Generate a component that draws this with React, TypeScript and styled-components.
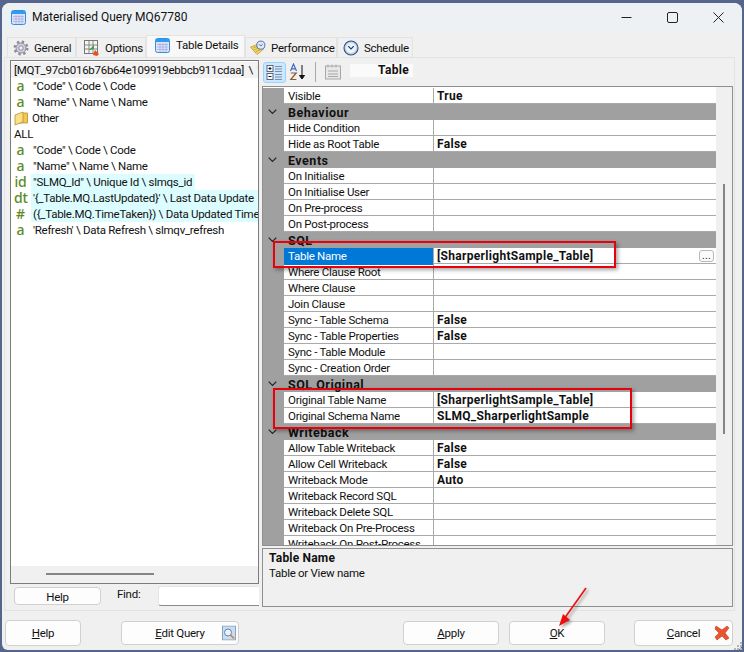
import React from "react";
import styled, { createGlobalStyle } from "styled-components";

const Global = createGlobalStyle`
  html, body { margin: 0; padding: 0; background: #55658c; overflow: hidden; }
  * { box-sizing: border-box; }
`;

const Screen = styled.div`
  position: relative;
  width: 744px;
  height: 652px;
  padding: 3px 2px 2px 2px;
  background: #55658c;
  font-family: "Roboto", "Liberation Sans", sans-serif;
  font-size: 11.5px;
  letter-spacing: -0.27px;
  color: #111;
  overflow: hidden;
`;
const Dialog = styled.div`
  width: 740px;
  height: 647px;
  display: flex;
  flex-direction: column;
  background: #f0f0f0;
  border-radius: 8px 8px 6px 6px;
  overflow: hidden;
`;
const TitleBar = styled.div`
  height: 30px;
  flex: none;
  display: flex;
  align-items: center;
  padding: 0 0 2px 9px;
  gap: 6px;
  background: #eef1f4;
`;
const TitleText = styled.span`
  flex: 1;
  font-size: 12px;
  letter-spacing: 0;
`;
const WinBtns = styled.div`
  display: flex;
  align-items: center;
  padding-right: 1px;
`;
const WinBtn = styled.div`
  width: 46px;
  height: 28px;
  display: flex;
  align-items: center;
  justify-content: center;
`;
const TabRow = styled.div`
  height: 24px;
  flex: none;
  display: flex;
  align-items: flex-end;
  padding-left: 5px;
`;
const Tab = styled.div<{ $active?: boolean; $w: number; $pl?: number }>`
  width: ${(p) => p.$w}px;
  height: ${(p) => (p.$active ? 22 : 20)}px;
  display: flex;
  align-items: center;
  gap: ${(p) => (p.$active ? 6 : 5)}px;
  padding: ${(p) => (p.$active ? "0 0 3px 8px" : `0 0 0 ${p.$pl ?? 5}px`)};
  background: ${(p) => (p.$active ? "#f8f8f8" : "#f0f0f0")};
  border: 1px solid #e3e3e3;
  border-bottom: none;
`;
const TabPanel = styled.div`
  height: 554px;
  flex: none;
  margin: 0 7px 0 2px;
  border: 1px solid #e3e3e3;
  display: grid;
  grid-template-columns: 249px 471px;
  column-gap: 3px;
  padding: 2px 3px 4px 5px;
`;
const LeftCol = styled.div`
  display: flex;
  flex-direction: column;
`;
const ListBox = styled.div`
  height: 524px;
  flex: none;
  display: flex;
  flex-direction: column;
  border: 1px solid #7c7c7c;
  background: #fff;
`;
const ListBody = styled.div`
  flex: 1;
  padding-top: 1px;
  overflow: hidden;
`;
const ListRow = styled.div<{ $selected?: boolean }>`
  height: 16px;
  display: flex;
  align-items: center;
  white-space: pre;
  overflow: hidden;
  background: ${(p) => (p.$selected ? "#f2f2f2" : "transparent")};
  word-spacing: ${(p) => (p.$selected ? "2px" : "0")};
  padding-left: 3px;
`;
const TypeIcon = styled.span`
  width: 13px;
  flex: none;
  margin-right: 4px;
  text-align: center;
  font-size: 14px;
  font-weight: 500;
  letter-spacing: -0.2px;
  color: #5c8a1e;
  font-family: "Noto Sans", sans-serif;
  line-height: 16px;
`;
const FolderWrap = styled.span`
  width: 16px;
  flex: none;
  display: flex;
`;
const ItemText = styled.span<{ $hl?: boolean; $fill?: boolean }>`
  padding: 0 3px 0 2px;
  line-height: 16px;
  background: ${(p) => (p.$hl ? "#dcfdff" : "transparent")};
  ${(p) => (p.$fill ? "flex: 1;" : "")}
`;
const ListScroll = styled.div`
  height: 17px;
  flex: none;
  background: #f0f0f0;
  padding: 7px 0 0 35px;
`;
const ScrollThumbH = styled.div`
  width: 108px;
  height: 2px;
  background: #858585;
`;
const FindRow = styled.div`
  flex: 1;
  display: flex;
  align-items: center;
  padding-left: 4px;
`;
const SmallButton = styled.div`
  width: 87px;
  height: 18px;
  padding-top: 2px;
  border: 1px solid #d0d0d0;
  border-radius: 4px;
  background: #fdfdfd;
  display: flex;
  align-items: center;
  justify-content: center;
`;
const FindLabel = styled.span`
  margin-left: 16px;
  width: 41px;
  margin-top: -3px;
`;
const FindInput = styled.div`
  flex: 1;
  height: 20px;
  background: #fff;
  border-bottom: 1px solid #8a8a8a;
  border-top: 1px solid #e6e6e6;
  border-left: 1px solid #e6e6e6;
  border-radius: 3px 0 0 3px;
`;
const RightCol = styled.div`
  display: flex;
  flex-direction: column;
`;
const Toolbar = styled.div`
  height: 26px;
  flex: none;
  display: flex;
  align-items: center;
  gap: 2px;
  padding: 0 0 2px 1px;
`;
const ToolActive = styled.div`
  width: 23px;
  height: 21px;
  border-radius: 3px;
  background: #cce8ff;
  border: 1px solid #99d1ff;
  display: flex;
  align-items: center;
  justify-content: center;
`;
const ToolBtn = styled.div`
  width: 20px;
  height: 21px;
  display: flex;
  align-items: center;
  justify-content: center;
`;
const ToolSep = styled.div`
  width: 1px;
  height: 20px;
  background: #a8a8a8;
  margin: 0 5px;
`;
const ToolTitle = styled.div`
  width: 63px;
  height: 13px;
  margin-left: 5px;
  margin-top: -3px;
  padding-right: 4px;
  background: #fafafa;
  font-weight: 700;
  font-size: 12px;
  letter-spacing: 0.3px;
  text-align: right;
  line-height: 13px;
`;
const GridBox = styled.div`
  height: 460px;
  flex: none;
  display: flex;
  border: 1px solid #8f8f8f;
  background: #fff;
  overflow: hidden;
`;
const GridBody = styled.div`
  flex: 1;
  padding-top: 1px;
  overflow: hidden;
  background: #fff;
`;
const CatRow = styled.div`
  height: 16px;
  display: flex;
  align-items: center;
  background: #a0a0a0;
  font-weight: 700;
  font-size: 12.5px;
  letter-spacing: 0.5px;
  color: #111;
`;
const Chevron = styled.span`
  width: 25px;
  padding-left: 5px;
  flex: none;
  display: flex;
`;
const PropRow = styled.div`
  height: 16px;
  display: grid;
  grid-template-columns: 21px 150px 1fr;
  border-bottom: 1px solid #a9a9a9;
  line-height: 17px;
`;
const Margin = styled.div`
  background: #a0a0a0;
  margin-bottom: -1px;
`;
const PropName = styled.div<{ $selected?: boolean }>`
  padding-left: 4px;
  white-space: nowrap;
  overflow: hidden;
  border-right: 1px solid #a9a9a9;
  background: ${(p) => (p.$selected ? "#0078d7" : "transparent")};
  color: ${(p) => (p.$selected ? "#fff" : "#111")};
`;
const PropValue = styled.div`
  position: relative;
  padding-left: 3px;
  font-weight: 700;
  font-size: 12px;
  letter-spacing: 0.3px;
  white-space: nowrap;
`;
const Ellipsis = styled.div`
  position: absolute;
  right: 2px;
  top: 2px;
  width: 15px;
  height: 12px;
  border: 1px solid #b8b8b8;
  border-radius: 3px;
  background: #fbfbfb;
  line-height: 10px;
  text-align: center;
  font-size: 10px;
  font-weight: 400;
`;
const ScrollV = styled.div`
  width: 16px;
  flex: none;
  background: #f0f0f0;
  padding: 97px 0 0 7px;
`;
const ThumbV = styled.div`
  width: 2px;
  height: 250px;
  background: #858585;
`;
const Description = styled.div`
  height: 59px;
  flex: none;
  margin-top: 2px;
  border: 1px solid #8f8f8f;
  padding: 2px 6px;
  line-height: 15px;
`;
const DescTitle = styled.div`
  font-weight: 700;
  font-size: 12px;
  letter-spacing: 0.2px;
`;
const BottomBar = styled.div`
  flex: 1;
  display: flex;
  align-items: center;
  padding: 5px 0 0 3px;
`;
const DlgButton = styled.div<{ $w: number; $ml?: number; $tall?: boolean }>`
  width: ${(p) => p.$w}px;
  height: ${(p) => (p.$tall ? 26 : 24)}px;
  margin-left: ${(p) => p.$ml ?? 0}px;
  position: relative;
  flex: none;
  display: flex;
  align-items: center;
  justify-content: center;
  border: 1px solid #d0d0d0;
  border-radius: 4px;
  background: #fdfdfd;
`;
const BtnIcon = styled.span`
  position: absolute;
  right: 2px;
  top: 50%;
  transform: translateY(-50%);
  display: flex;
`;
const Under = styled.span`
  text-decoration: underline;
`;
const RedBox = styled.div<{ $x: number; $y: number; $w: number; $h: number }>`
  position: absolute;
  left: ${(p) => p.$x}px;
  top: ${(p) => p.$y}px;
  width: ${(p) => p.$w}px;
  height: ${(p) => p.$h}px;
  border: 2px solid #e8000b;
  box-shadow: 2px 2px 4px rgba(0, 0, 0, 0.35);
  pointer-events: none;
`;
const Overlay = styled.svg`
  position: absolute;
  left: 0;
  top: 0;
  pointer-events: none;
`;
const Grip = styled.svg`
  position: absolute;
  right: 1px;
  bottom: 1px;
`;

const TableIcon = ({ size = 15 }: { size?: number }) => (
  <svg width={size} height={size} viewBox="0 0 15 15">
    <rect x="0.5" y="0.5" width="14" height="14" rx="2" fill="#dfe3f7" stroke="#2f8fe8" />
    <rect x="1" y="1" width="13" height="3" fill="#2f9cf0" />
    <path d="M2 6.5h11M2 9h11M2 11.5h11M5 5v9M8 5v9M11 5v9" stroke="#a9aee0" strokeWidth="0.8" />
  </svg>
);
const GearIcon = () => (
  <svg width="16" height="16" viewBox="0 0 16 16">
    <circle cx="8" cy="8" r="6.3" fill="none" stroke="#8a8a9c" strokeWidth="2.4" strokeDasharray="2.4 2.55" />
    <circle cx="8" cy="8" r="5" fill="#cfcfdc" stroke="#8c8ca0" />
    <circle cx="8" cy="8" r="2.2" fill="#f2f2f6" stroke="#8c8ca0" />
  </svg>
);
const OptionsIcon = () => (
  <svg width="16" height="16" viewBox="0 0 16 16">
    <rect x="0.5" y="0.5" width="13" height="13" fill="#f4f4f4" stroke="#777" />
    <path d="M5 1v12M9 1v12M1 5h12M1 9h12" stroke="#888" />
    <path d="M5 10l5-5v4h-2l-1 1z" fill="#3aa33a" />
    <path d="M9 15l2-5 4 4-2 2z" fill="#e8501e" />
  </svg>
);
const PerfIcon = () => (
  <svg width="16" height="16" viewBox="0 0 17 16">
    <path d="M0.5 7l8-3 6 5-7 6z" fill="#f5d76a" stroke="#b9962e" strokeWidth="0.8" />
    <path d="M3 8l6-2M4 10l6-2M6 12l5-2" stroke="#c79a22" strokeWidth="0.8" />
    <circle cx="11.5" cy="5" r="4.3" fill="#dfe9f7" stroke="#4a6aa4" />
    <path d="M9.6 4l1.9 1.9 1.9-1.9" stroke="#34507f" fill="none" strokeWidth="0.9" />
  </svg>
);
const ClockIcon = () => (
  <svg width="16" height="16" viewBox="0 0 16 16">
    <circle cx="8" cy="8" r="7" fill="#bcd4f0" stroke="#33527f" strokeWidth="1.1" />
    <circle cx="8" cy="8" r="5" fill="#eef4fb" />
    <path d="M5.2 6.2L8 9l2.8-2.8" stroke="#21375c" fill="none" strokeWidth="1.1" />
  </svg>
);
const Folder = () => (
  <svg width="15" height="15" viewBox="0 0 15 15">
    <path d="M9 2h4.5v10H5" fill="#f2c84f" stroke="#b8912a" strokeWidth="0.8" />
    <path d="M1 4l8-3v10l-8 3z" fill="#fbe08a" stroke="#b8912a" strokeWidth="0.8" />
  </svg>
);
const Chev = () => (
  <svg width="9" height="6" viewBox="0 0 9 6">
    <path d="M0.7 0.7L4.5 4.5L8.3 0.7" fill="none" stroke="#222" strokeWidth="1.2" />
  </svg>
);
const CatIcon = () => (
  <svg width="17" height="17" viewBox="0 0 17 17">
    <rect x="1" y="1.5" width="6" height="6" fill="#fff" stroke="#5a6a80" />
    <rect x="1" y="9.5" width="6" height="6" fill="#fff" stroke="#5a6a80" />
    <path d="M2.5 4.5h3M2.5 12.5h3M4 3v3" stroke="#111" />
    <path d="M9 2.5h7M9 5h7M9 7.5h7M9 10.5h7M9 13h7M9 15.5h7" stroke="#7c8ca6" />
  </svg>
);
const SortIcon = () => (
  <svg width="18" height="18" viewBox="0 0 18 18">
    <path d="M13 2v13M10.5 12.5L13 16l2.5-3.5z" stroke="#111" fill="#111" />
    <path d="M1.5 8L4.5 1l3 7M2.6 5.8h3.8" stroke="#3f6fc0" strokeWidth="1.2" fill="none" />
    <path d="M1.8 10h5.4L1.8 16.5h5.6" stroke="#8a5a30" strokeWidth="1.2" fill="none" />
  </svg>
);
const PagesIcon = () => (
  <svg width="18" height="18" viewBox="0 0 18 18">
    <rect x="1.5" y="3" width="15" height="13" fill="#e8e8e8" stroke="#a8a8a8" />
    <path d="M4 1.5v3M8 1.5v3M12 1.5v3M4 8h10M4 11h10M4 13.5h10" stroke="#a8a8a8" />
  </svg>
);
const PreviewIcon = () => (
  <svg width="14" height="15" viewBox="0 0 14 15">
    <rect x="0.5" y="0.5" width="13" height="14" fill="#c8dcf2" stroke="#8aa2bd" />
    <circle cx="6" cy="7" r="3.5" fill="#eaf4ff" stroke="#5f86b5" />
    <path d="M8.5 9.5L12 13" stroke="#e07a2a" strokeWidth="1.6" />
  </svg>
);
const RedX = () => (
  <svg width="16" height="16" viewBox="0 0 16 16">
    <path d="M2 1l6 4 5-4 2 2-4 5 4 5-3 2-4-4-5 4-2-3 4-4-4-4z" fill="#e8552e" stroke="#c23a1c" strokeWidth="0.6" />
  </svg>
);

type Item = { icon?: string; text: string; hl?: boolean; fill?: boolean; folder?: boolean };
const items: Item[] = [
  { icon: "a", text: '"Code" \\ Code \\ Code' },
  { icon: "a", text: '"Name" \\ Name \\ Name' },
  { folder: true, text: "Other" },
];
const items2: Item[] = [
  { icon: "a", text: '"Code" \\ Code \\ Code' },
  { icon: "a", text: '"Name" \\ Name \\ Name' },
  { icon: "id", text: '"SLMQ_Id" \\ Unique Id \\ slmqs_id', hl: true },
  { icon: "dt", text: "'{_Table.MQ.LastUpdated}' \\ Last Data Update", hl: true, fill: true },
  { icon: "#", text: "({_Table.MQ.TimeTaken}) \\ Data Updated Time", hl: true, fill: true },
  { icon: "a", text: "'Refresh' \\ Data Refresh \\ slmqv_refresh" },
];

type Row = { cat?: boolean; name: string; value?: string; sel?: boolean };
const rows: Row[] = [
  { name: "Visible", value: "True" },
  { cat: true, name: "Behaviour" },
  { name: "Hide Condition" },
  { name: "Hide as Root Table", value: "False" },
  { cat: true, name: "Events" },
  { name: "On Initialise" },
  { name: "On Initialise User" },
  { name: "On Pre-process" },
  { name: "On Post-process" },
  { cat: true, name: "SQL" },
  { name: "Table Name", value: "[SharperlightSample_Table]", sel: true },
  { name: "Where Clause Root" },
  { name: "Where Clause" },
  { name: "Join Clause" },
  { name: "Sync - Table Schema", value: "False" },
  { name: "Sync - Table Properties", value: "False" },
  { name: "Sync - Table Module" },
  { name: "Sync - Creation Order" },
  { cat: true, name: "SQL Original" },
  { name: "Original Table Name", value: "[SharperlightSample_Table]" },
  { name: "Original Schema Name", value: "SLMQ_SharperlightSample" },
  { cat: true, name: "Writeback" },
  { name: "Allow Table Writeback", value: "False" },
  { name: "Allow Cell Writeback", value: "False" },
  { name: "Writeback Mode", value: "Auto" },
  { name: "Writeback Record SQL" },
  { name: "Writeback Delete SQL" },
  { name: "Writeback On Pre-Process" },
  { name: "Writeback On Post-Process" },
];

const renderItem = (it: Item) => (
  <ListRow key={it.text + it.icon}>
    {it.folder ? (
      <FolderWrap><Folder /></FolderWrap>
    ) : (
      <TypeIcon>{it.icon}</TypeIcon>
    )}
    <ItemText $hl={it.hl} $fill={it.fill}>{it.text}</ItemText>
  </ListRow>
);

export default function App() {
  return (
    <Screen>
      <Global />
      <Dialog>
        <TitleBar>
          <TableIcon />
          <TitleText>Materialised Query MQ67780</TitleText>
          <WinBtns>
            <WinBtn>
              <svg width="11" height="11" viewBox="0 0 11 11"><path d="M0.5 5.5h10" stroke="#222" /></svg>
            </WinBtn>
            <WinBtn>
              <svg width="11" height="11" viewBox="0 0 11 11"><rect x="0.5" y="0.5" width="10" height="10" rx="1.5" fill="none" stroke="#222" /></svg>
            </WinBtn>
            <WinBtn>
              <svg width="11" height="11" viewBox="0 0 11 11"><path d="M0.5 0.5l10 10M10.5 0.5l-10 10" stroke="#222" /></svg>
            </WinBtn>
          </WinBtns>
        </TitleBar>
        <TabRow>
          <Tab $w={69} $pl={5}><GearIcon />General</Tab>
          <Tab $w={70} $pl={7}><OptionsIcon />Options</Tab>
          <Tab $w={99} $active><TableIcon />Table Details</Tab>
          <Tab $w={92} $pl={4}><PerfIcon />Performance</Tab>
          <Tab $w={76}><ClockIcon />Schedule</Tab>
        </TabRow>
        <TabPanel>
          <LeftCol>
            <ListBox>
              <ListBody>
                <ListRow $selected>[MQT_97cb016b76b64e109919ebbcb911cdaa] \ '</ListRow>
                {items.map(renderItem)}
                <ListRow>ALL</ListRow>
                {items2.map(renderItem)}
              </ListBody>
              <ListScroll><ScrollThumbH /></ListScroll>
            </ListBox>
            <FindRow>
              <SmallButton>Help</SmallButton>
              <FindLabel>Find:</FindLabel>
              <FindInput />
            </FindRow>
          </LeftCol>
          <RightCol>
            <Toolbar>
              <ToolActive><CatIcon /></ToolActive>
              <ToolBtn><SortIcon /></ToolBtn>
              <ToolSep />
              <ToolBtn><PagesIcon /></ToolBtn>
              <ToolTitle>Table</ToolTitle>
            </Toolbar>
            <GridBox>
              <GridBody>
                {rows.map((r) =>
                  r.cat ? (
                    <CatRow key={r.name}>
                      <Chevron><Chev /></Chevron>
                      {r.name}
                    </CatRow>
                  ) : (
                    <PropRow key={r.name}>
                      <Margin />
                      <PropName $selected={r.sel}>{r.name}</PropName>
                      <PropValue>
                        {r.value}
                        {r.sel && <Ellipsis>...</Ellipsis>}
                      </PropValue>
                    </PropRow>
                  )
                )}
              </GridBody>
              <ScrollV><ThumbV /></ScrollV>
            </GridBox>
            <Description>
              <DescTitle>Table Name</DescTitle>
              Table or View name
            </Description>
          </RightCol>
        </TabPanel>
        <BottomBar>
          <DlgButton $w={76} $tall><span><Under>H</Under>elp</span></DlgButton>
          <DlgButton $w={118} $ml={40}>
            <span><Under>E</Under>dit Query</span>
            <BtnIcon><PreviewIcon /></BtnIcon>
          </DlgButton>
          <DlgButton $w={96} $ml={164}><span><Under>A</Under>pply</span></DlgButton>
          <DlgButton $w={96} $ml={10}><span><Under>O</Under>K</span></DlgButton>
          <DlgButton $w={99} $ml={29} $tall>
            <span><Under>C</Under>ancel</span>
            <BtnIcon><RedX /></BtnIcon>
          </DlgButton>
        </BottomBar>
      </Dialog>
      <RedBox $x={273} $y={241} $w={343} $h={27} />
      <RedBox $x={273} $y={388} $w={359} $h={41} />
      <Overlay width="744" height="652">
        <defs>
          <filter id="sh" x="-30%" y="-30%" width="180%" height="180%">
            <feDropShadow dx="2" dy="2" stdDeviation="1.5" floodColor="#000" floodOpacity="0.35" />
          </filter>
        </defs>
        <g filter="url(#sh)">
          <path d="M586 588L564 619" stroke="#ee1111" strokeWidth="1.6" />
          <path d="M559 626L563 614L570 620z" fill="#ee1111" />
        </g>
      </Overlay>
      <Grip width="10" height="10" viewBox="0 0 10 10">
        <g fill="#b5b5b5">
          <rect x="7" y="1" width="2" height="2" />
          <rect x="4" y="4" width="2" height="2" />
          <rect x="7" y="4" width="2" height="2" />
          <rect x="1" y="7" width="2" height="2" />
          <rect x="4" y="7" width="2" height="2" />
          <rect x="7" y="7" width="2" height="2" />
        </g>
      </Grip>
    </Screen>
  );
}
